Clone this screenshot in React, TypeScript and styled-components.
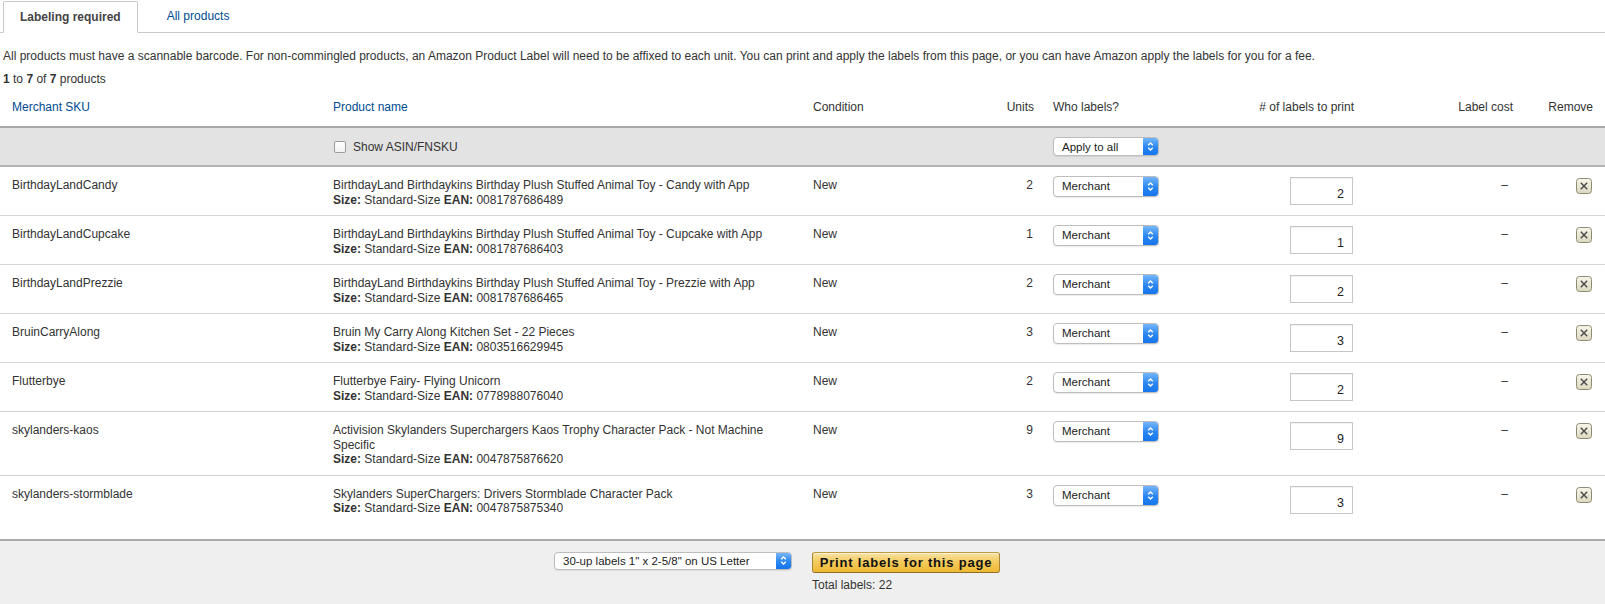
import styled, { createGlobalStyle } from 'styled-components';

const GlobalStyle = createGlobalStyle`
  html, body {
    margin: 0;
    padding: 0;
    background: #fff;
  }
  body {
    font-family: 'Liberation Sans', Arial, sans-serif;
    font-size: 12px;
    color: #333;
  }
`;

const Page = styled.div`
  width: 1605px;
  height: 604px;
  overflow: hidden;
  display: flex;
  flex-direction: column;
`;

const TabBar = styled.div`
  display: flex;
  align-items: flex-end;
  gap: 13px;
  height: 32px;
  border-bottom: 1px solid #c9c9c9;
  padding-left: 3px;
`;

const Tab = styled.div<{ $active?: boolean }>`
  height: 31px;
  line-height: 29px;
  padding: 0 16px;
  box-sizing: border-box;
  margin-bottom: -1px;
  ${({ $active }) =>
    $active
      ? `
    font-weight: bold;
    color: #444;
    background: #fff;
    border: 1px solid #c9c9c9;
    border-bottom-color: #fff;
    border-radius: 2px 2px 0 0;
    line-height: 31px;
    height: 32px;
  `
      : `
    color: #004b91;
  `}
`;

const Intro = styled.p`
  margin: 16px 0 0 3px;
  line-height: 15px;
`;

const Count = styled.p`
  margin: 8px 0 0 3px;
  line-height: 15px;
`;

const Row = styled.div`
  display: grid;
  grid-template-columns: 321px 480px 160px 80px 184px 123px 153px 80px;
  padding: 0 12px;
`;

const HeadRow = styled(Row)`
  padding-top: 13px;
  padding-bottom: 11px;
  line-height: 15px;
`;

const HeadCell = styled.div<{ $link?: boolean; $align?: 'left' | 'right'; $pr?: number }>`
  color: ${({ $link }) => ($link ? '#004b91' : '#333')};
  text-align: ${({ $align }) => $align ?? 'left'};
  padding-right: ${({ $pr }) => $pr ?? 0}px;
`;

const Band = styled(Row)`
  background: #e3e3e3;
  border-top: 2px solid #a9a9a9;
  border-bottom: 2px solid #b3b3b3;
  height: 37px;
  align-items: center;
`;

const ProductRow = styled(Row)<{ $last?: boolean }>`
  padding-top: 11px;
  padding-bottom: ${({ $last }) => ($last ? '23px' : '8px')};
  border-bottom: ${({ $last }) => ($last ? 'none' : '1px solid #d6d6d6')};
  line-height: 14.5px;
  align-items: start;
`;

const Cell = styled.div<{ $align?: 'left' | 'right'; $pr?: number }>`
  text-align: ${({ $align }) => $align ?? 'left'};
  padding-right: ${({ $pr }) => $pr ?? 0}px;
`;

const ProductName = styled.div`
  max-width: 450px;
`;

const CheckLabel = styled.label`
  display: flex;
  align-items: center;
  gap: 7px;
  padding-left: 1px;
`;

const Box = styled.span`
  width: 10px;
  height: 10px;
  border: 1px solid #9c9c9c;
  border-radius: 2px;
  background: linear-gradient(#fff, #f1f1f1);
`;

const Select = styled.div<{ $w: number; $h: number }>`
  display: flex;
  width: ${({ $w }) => $w}px;
  height: ${({ $h }) => $h}px;
  box-sizing: border-box;
  border: 1px solid #bdbdbd;
  border-radius: 4px;
  background: #fff;
  overflow: hidden;
  box-shadow: 0 1px 1px rgba(0, 0, 0, 0.08);
`;

const SelectText = styled.span`
  flex: 1;
  padding-left: 8px;
  display: flex;
  align-items: center;
  font-size: 11.5px;
  color: #222;
  white-space: nowrap;
`;

const SelectCap = styled.span`
  width: 15px;
  display: flex;
  align-items: center;
  justify-content: center;
  background: linear-gradient(#74b6fb, #2a86f2 55%, #1675ec);
`;

const RowSelect = styled.div`
  margin-top: -2px;
`;

const CountInput = styled.div`
  width: 63px;
  height: 28px;
  box-sizing: border-box;
  margin-top: -1px;
  margin-left: auto;
  margin-right: 7px;
  border: 1px solid #c6c6c6;
  box-shadow: inset 0 1px 1px rgba(0, 0, 0, 0.06);
  text-align: right;
  padding: 9px 8px 0 0;
  font-size: 12.5px;
  color: #222;
`;

const RemoveBtn = styled.div`
  display: flex;
  justify-content: flex-end;
  padding-right: 1px;
`;

const Footer = styled.div`
  flex: 1;
  background: #efefef;
  border-top: 2px solid #a9a9a9;
  display: flex;
  align-items: flex-start;
  padding: 11px 0 0 554px;
  gap: 20px;
`;

const PrintBlock = styled.div`
  display: flex;
  flex-direction: column;
  gap: 5px;
`;

const PrintButton = styled.button`
  width: 188px;
  height: 21px;
  padding: 0;
  border: 1px solid #a88734;
  border-color: #c29a3b #a88734 #8c6f2c;
  border-radius: 3px;
  background: linear-gradient(#f9e3a6, #f3cb5e 45%, #eeb933);
  font-family: 'Liberation Sans', Arial, sans-serif;
  font-weight: bold;
  font-size: 13px;
  letter-spacing: 0.8px;
  color: #111;
  box-shadow: inset 0 1px 0 rgba(255, 255, 255, 0.6);
`;

const Total = styled.div`
  line-height: 15px;
`;

const Chevrons = () => (
  <svg width="7" height="11" viewBox="0 0 7 11">
    <path d="M1.2 4.3 L3.5 2 L5.8 4.3 M1.2 6.7 L3.5 9 L5.8 6.7" stroke="#fff" strokeWidth="1.3" fill="none" />
  </svg>
);

const FakeSelect = ({ text, w, h }: { text: string; w: number; h: number }) => (
  <Select $w={w} $h={h}>
    <SelectText>{text}</SelectText>
    <SelectCap>
      <Chevrons />
    </SelectCap>
  </Select>
);

const RemoveIcon = () => (
  <svg width="16" height="16" viewBox="0 0 16 16">
    <defs>
      <linearGradient id="rm" x1="0" y1="0" x2="0" y2="1">
        <stop offset="0" stopColor="#f7f6ea" />
        <stop offset="1" stopColor="#dcd8bf" />
      </linearGradient>
    </defs>
    <rect x="0.5" y="0.5" width="15" height="15" rx="3" fill="url(#rm)" stroke="#8c8b74" />
    <path d="M4.8 4.8 L11.2 11.2 M11.2 4.8 L4.8 11.2" stroke="#4a4a4a" strokeWidth="1.4" />
  </svg>
);

type Product = {
  sku: string;
  name: string;
  ean: string;
  units: number;
};

const products: Product[] = [
  { sku: 'BirthdayLandCandy', name: 'BirthdayLand Birthdaykins Birthday Plush Stuffed Animal Toy - Candy with App', ean: '0081787686489', units: 2 },
  { sku: 'BirthdayLandCupcake', name: 'BirthdayLand Birthdaykins Birthday Plush Stuffed Animal Toy - Cupcake with App', ean: '0081787686403', units: 1 },
  { sku: 'BirthdayLandPrezzie', name: 'BirthdayLand Birthdaykins Birthday Plush Stuffed Animal Toy - Prezzie with App', ean: '0081787686465', units: 2 },
  { sku: 'BruinCarryAlong', name: 'Bruin My Carry Along Kitchen Set - 22 Pieces', ean: '0803516629945', units: 3 },
  { sku: 'Flutterbye', name: 'Flutterbye Fairy- Flying Unicorn', ean: '0778988076040', units: 2 },
  { sku: 'skylanders-kaos', name: 'Activision Skylanders Superchargers Kaos Trophy Character Pack - Not Machine Specific', ean: '0047875876620', units: 9 },
  { sku: 'skylanders-stormblade', name: 'Skylanders SuperChargers: Drivers Stormblade Character Pack', ean: '0047875875340', units: 3 },
];

export default function App() {
  const total = products.reduce((sum, p) => sum + p.units, 0);
  return (
    <Page>
      <GlobalStyle />
      <TabBar>
        <Tab $active>Labeling required</Tab>
        <Tab>All products</Tab>
      </TabBar>
      <Intro>
        All products must have a scannable barcode. For non-commingled products, an Amazon Product Label will need to be
        affixed to each unit. You can print and apply the labels from this page, or you can have Amazon apply the labels
        for you for a fee.
      </Intro>
      <Count>
        <b>1</b> to <b>7</b> of <b>7</b> products
      </Count>
      <HeadRow>
        <HeadCell $link>Merchant SKU</HeadCell>
        <HeadCell $link>Product name</HeadCell>
        <HeadCell>Condition</HeadCell>
        <HeadCell $align="right" $pr={19}>
          Units
        </HeadCell>
        <HeadCell>Who labels?</HeadCell>
        <HeadCell $align="right" $pr={6}>
          # of labels to print
        </HeadCell>
        <HeadCell $align="right">Label cost</HeadCell>
        <HeadCell $align="right">Remove</HeadCell>
      </HeadRow>
      <Band>
        <div />
        <CheckLabel>
          <Box />
          Show ASIN/FNSKU
        </CheckLabel>
        <div />
        <div />
        <FakeSelect text="Apply to all" w={106} h={19} />
        <div />
        <div />
        <div />
      </Band>
      {products.map((p, i) => (
        <ProductRow key={p.sku} $last={i === products.length - 1}>
          <Cell>{p.sku}</Cell>
          <Cell>
            <ProductName>{p.name}</ProductName>
            <div>
              <b>Size:</b> Standard-Size <b>EAN:</b> {p.ean}
            </div>
          </Cell>
          <Cell>New</Cell>
          <Cell $align="right" $pr={20}>
            {p.units}
          </Cell>
          <RowSelect>
            <FakeSelect text="Merchant" w={106} h={21} />
          </RowSelect>
          <CountInput>{p.units}</CountInput>
          <Cell $align="right" $pr={5}>
            –
          </Cell>
          <RemoveBtn>
            <RemoveIcon />
          </RemoveBtn>
        </ProductRow>
      ))}
      <Footer>
        <FakeSelect text={'30-up labels 1" x 2-5/8" on US Letter'} w={238} h={18} />
        <PrintBlock>
          <PrintButton>Print labels for this page</PrintButton>
          <Total>Total labels: {total}</Total>
        </PrintBlock>
      </Footer>
    </Page>
  );
}
